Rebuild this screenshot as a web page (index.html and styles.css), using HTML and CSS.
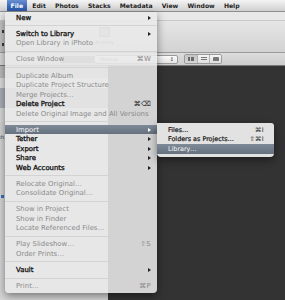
FILE: index.html
```html
<!DOCTYPE html>
<html>
<head>
<meta charset="utf-8">
<link rel="stylesheet" href="styles.css">
</head>
<body>
<div class="screen">
  <div class="menubar">
    <span class="mb-item active">File</span>
    <span class="mb-item">Edit</span>
    <span class="mb-item">Photos</span>
    <span class="mb-item">Stacks</span>
    <span class="mb-item">Metadata</span>
    <span class="mb-item">View</span>
    <span class="mb-item">Window</span>
    <span class="mb-item">Help</span>
  </div>
  <div class="window">
    <div class="titlebar"></div>
    <div class="toolbar">
      <div class="tb-left">
        <span class="tb-dot"></span>
        <span class="tb-dot"></span>
      </div>
      <div class="tb-mid">
        <div class="tb-tool">
          <span class="tb-icon"></span>
          <span class="tb-label">Activity</span>
        </div>
      </div>
    </div>
    <div class="controlbar">
      <div class="cb-left"></div>
      <div class="cb-search"></div>
      <div class="popup"><span>Manual</span><span class="updown">&#x2195;</span></div>
      <div class="seg">
        <span class="seg-btn on"><span class="ic-grid"></span></span>
        <span class="seg-btn"><span class="ic-list"></span></span>
        <span class="seg-btn"><span class="ic-folder"></span></span>
      </div>
    </div>
    <div class="main">
      <div class="sidebar">
        <div class="sb-row r1"></div>
        <div class="sb-row r2"></div>
        <div class="sb-row r3"></div>
        <div class="sb-row r4"></div>
        <div class="sb-row r5"><span class="sb-text">th</span></div>
        <div class="sb-row r6"></div>
        <div class="sb-row r7"><span class="sb-blue"></span></div>
        <div class="sb-row r8"></div>
      </div>
      <div class="content"></div>
    </div>
  </div>

  <div class="menu">
    <div class="item on"><span>New</span><span class="arrow"></span></div>
    <div class="sep"></div>
    <div class="item on"><span>Switch to Library</span><span class="arrow"></span></div>
    <div class="item"><span>Open Library in iPhoto</span></div>
    <div class="sep"></div>
    <div class="item"><span>Close Window</span><span class="key">&#x2318;W</span></div>
    <div class="sep"></div>
    <div class="item"><span>Duplicate Album</span></div>
    <div class="item"><span>Duplicate Project Structure</span></div>
    <div class="item"><span>Merge Projects…</span></div>
    <div class="item on"><span>Delete Project</span><span class="key">&#x2318;&#x232B;</span></div>
    <div class="item"><span>Delete Original Image and All Versions</span></div>
    <div class="sep"></div>
    <div class="item on hl"><span>Import</span><span class="arrow"></span></div>
    <div class="item on"><span>Tether</span><span class="arrow"></span></div>
    <div class="item on"><span>Export</span><span class="arrow"></span></div>
    <div class="item on"><span>Share</span><span class="arrow"></span></div>
    <div class="item on"><span>Web Accounts</span><span class="arrow"></span></div>
    <div class="sep"></div>
    <div class="item"><span>Relocate Original…</span></div>
    <div class="item"><span>Consolidate Original…</span></div>
    <div class="sep"></div>
    <div class="item"><span>Show in Project</span></div>
    <div class="item"><span>Show in Finder</span></div>
    <div class="item"><span>Locate Referenced Files…</span></div>
    <div class="sep"></div>
    <div class="item"><span>Play Slideshow…</span><span class="key">&#x21E7;S</span></div>
    <div class="item"><span>Order Prints…</span></div>
    <div class="sep"></div>
    <div class="item on"><span>Vault</span><span class="arrow"></span></div>
    <div class="sep"></div>
    <div class="item"><span>Print…</span><span class="key">&#x2318;P</span></div>
  </div>

  <div class="submenu">
    <div class="item on"><span>Files…</span><span class="key">&#x2318;I</span></div>
    <div class="item on"><span>Folders as Projects…</span><span class="key">&#x21E7;&#x2318;I</span></div>
    <div class="item hl"><span>Library…</span></div>
  </div>
</div>
</body>
</html>
```

FILE: styles.css
```css
* { box-sizing: border-box; }

html, body {
  margin: 0;
  padding: 0;
}

body {
  width: 285px;
  height: 300px;
  overflow: hidden;
  background: #333333;
  font-family: "DejaVu Sans", "Liberation Sans", sans-serif;
}

.screen {
  position: relative;
  width: 285px;
  height: 300px;
  overflow: hidden;
}

/* ---------- menu bar ---------- */
.menubar {
  height: 12px;
  display: flex;
  align-items: stretch;
  gap: 2px;
  padding-left: 7px;
  background: linear-gradient(#f4f4f4, #dedede 60%, #cfcfcf);
  border-bottom: 1px solid #8e8e8e;
  font-size: 6.1px;
  font-weight: bold;
  color: #1e1e1e;
}

.mb-item {
  display: flex;
  align-items: center;
  padding: 0 3.6px;
}

.mb-item.active {
  color: #fff;
  background: linear-gradient(#6a8fd0, #3a66b8 60%, #2c58a8);
}

/* ---------- background window ---------- */
.window {
  display: flex;
  flex-direction: column;
  height: 288px;
}

.titlebar {
  height: 9px;
  background: #e8e8e8;
  border-bottom: 1px solid #c8c8c8;
}

.toolbar {
  height: 32px;
  display: flex;
  background: linear-gradient(#e6e6e6, #d2d2d2);
  border-bottom: 1px solid #9a9a9a;
}

.tb-left {
  width: 5px;
  background: #c2c2c2;
  display: flex;
  flex-direction: column;
  align-items: center;
  gap: 10px;
  padding-top: 9px;
}

.tb-dot {
  width: 2px;
  height: 3px;
  background: #3a3a3a;
}

.tb-mid {
  flex: 1;
  display: flex;
  padding-left: 90px;
  padding-top: 6px;
}

.tb-tool {
  display: flex;
  flex-direction: column;
  align-items: center;
  gap: 2px;
}

.tb-icon {
  width: 11px;
  height: 10px;
  border: 1px solid #8a8a8a;
  background: #bdbdbd;
  border-radius: 1px;
}

.tb-label {
  font-size: 5px;
  color: #555;
}

.controlbar {
  height: 13px;
  display: flex;
  align-items: center;
  background: linear-gradient(#dcdcdc, #cdcdcd);
  border-bottom: 1px solid #7a7a7a;
}

.cb-left {
  width: 5px;
  height: 100%;
  background: #d8d8d8;
}

.cb-search {
  width: 40px;
  height: 7px;
  margin-left: 55px;
  background: #8e8e8e;
}

.popup {
  margin-left: -6px;
  width: 84px;
  height: 9px;
  display: flex;
  justify-content: space-between;
  align-items: center;
  padding: 0 3px 0 5px;
  background: linear-gradient(#fbfbfb, #e4e4e4);
  border: 1px solid #9a9a9a;
  border-radius: 2px;
  font-size: 5px;
  color: #666;
}

.updown {
  font-size: 5px;
  color: #333;
}

.seg {
  margin-left: 6px;
  display: flex;
  height: 10px;
  border: 1px solid #9a9a9a;
  border-radius: 2px;
  overflow: hidden;
}

.seg-btn {
  width: 12px;
  display: flex;
  align-items: center;
  justify-content: center;
  background: linear-gradient(#f6f6f6, #dedede);
  border-left: 1px solid #b0b0b0;
}

.seg-btn:first-child { border-left: none; }

.seg-btn.on { background: linear-gradient(#c4c4c4, #d6d6d6); }

.ic-grid {
  width: 6px;
  height: 4px;
  background:
    linear-gradient(90deg, transparent 2px, #ccc 2px, #ccc 3px, transparent 3px),
    #6a6a6a;
}

.ic-list {
  width: 6px;
  height: 4px;
  background: repeating-linear-gradient(#777 0 1px, transparent 1px 2px);
}

.ic-folder {
  width: 6px;
  height: 4px;
  background: #777;
  border-radius: 1px 1px 0 0;
}

.main {
  flex: 1;
  display: flex;
}

.sidebar {
  width: 108px;
  display: flex;
  flex-direction: column;
  background: #d6d6d6;
}

.sb-row { background: #d6d6d6; }
.sb-row.r1 { height: 12px; background: #bababa; }
.sb-row.r2 { height: 10px; background: #dcdcdc; }
.sb-row.r3 { height: 20px; background: #a9aeb5; }
.sb-row.r4 { height: 14px; background: #d9d9d9; }
.sb-row.r5 {
  height: 20px;
  background: #d4d4d4;
  display: flex;
  align-items: flex-end;
  padding-bottom: 2px;
}
.sb-text {
  font-size: 5px;
  color: #333;
  margin-left: -1px;
}
.sb-row.r6 { height: 44px; }
.sb-row.r7 {
  height: 20px;
  display: flex;
  align-items: center;
}
.sb-blue {
  width: 3px;
  height: 3px;
  margin-left: 1px;
  background: #3c6fc0;
}
.sb-row.r8 { flex: 1; }

.content {
  flex: 1;
  background: #333333;
}

/* ---------- menus ---------- */
.menu,
.submenu {
  position: absolute;
  background: rgba(233, 233, 233, 0.88);
  font-size: 6.9px;
  box-shadow: 0 3px 8px rgba(0, 0, 0, 0.45);
}

.menu {
  left: 5px;
  top: 12px;
  width: 152px;
  padding: 1px 0 2.5px;
  border-radius: 0 0 4px 4px;
}

.submenu {
  left: 157px;
  top: 123px;
  width: 117px;
  padding: 2px 0 3px;
  border-radius: 0 3px 4px 4px;
  background: rgba(236, 236, 236, 0.95);
  font-size: 6.4px;
}

.item {
  height: 9.5px;
  display: flex;
  align-items: center;
  justify-content: space-between;
  padding: 0 6px 0 11px;
  color: #8a8a8a;
  white-space: nowrap;
}

.submenu .item {
  padding: 0 10px 0 11px;
}

.item.on {
  color: #111;
  -webkit-text-stroke: 0.3px #111;
}

.submenu .item.on {
  -webkit-text-stroke: 0.2px #111;
}

.item.hl {
  color: #fbfbfb;
  -webkit-text-stroke: 0;
  background: linear-gradient(#7f8a98, #66717f);
}

.key {
  letter-spacing: 0.3px;
  -webkit-text-stroke: 0;
}

.item.on .key { color: #222; }

.arrow {
  width: 0;
  height: 0;
  margin-right: 0.5px;
  border-left: 3.5px solid #222;
  border-top: 2.2px solid transparent;
  border-bottom: 2.2px solid transparent;
}

.item.hl .arrow { border-left-color: #fff; }

.sep {
  height: 6.6px;
  display: flex;
  align-items: center;
}

.sep::before {
  content: "";
  flex: 1;
  height: 1px;
  background: #d3d3d3;
}
```
